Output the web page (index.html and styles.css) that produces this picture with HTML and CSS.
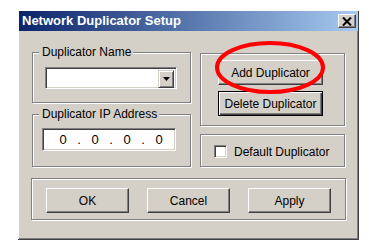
FILE: index.html
```html
<!DOCTYPE html>
<html>
<head>
<meta charset="utf-8">
<link rel="stylesheet" href="styles.css">
</head>
<body>
<div class="dialog">
  <div class="titlebar">
    <span class="title">Network Duplicator Setup</span>
    <span class="close"><svg width="10" height="9" viewBox="0 0 10 9"><path d="M1 0.5 L9 8.5 M9 0.5 L1 8.5" stroke="#000" stroke-width="2"/></svg></span>
  </div>
  <div class="content">
    <div class="main">
      <div class="col">
        <fieldset class="group name-group">
          <legend>Duplicator Name</legend>
          <div class="combo sunken">
            <div class="combo-btn"><svg width="7" height="4" viewBox="0 0 7 4"><path d="M0 0 H7 L3.5 4 Z" fill="#000"/></svg></div>
          </div>
        </fieldset>
        <fieldset class="group ip-group">
          <legend>Duplicator IP Address</legend>
          <div class="ipbox sunken">
            <span class="oct">0</span><span class="dot">.</span><span class="oct">0</span><span class="dot">.</span><span class="oct">0</span><span class="dot">.</span><span class="oct">0</span>
          </div>
        </fieldset>
      </div>
      <div class="col right">
        <fieldset class="group btn-group">
          <div class="btn add">Add Duplicator</div>
          <div class="btn del">Delete Duplicator</div>
        </fieldset>
        <fieldset class="group chk-group">
          <div class="chk-row">
            <span class="check sunken"></span>
            <span class="chk-label">Default Duplicator</span>
          </div>
        </fieldset>
      </div>
    </div>
    <fieldset class="group bottom-group">
      <div class="btn-row">
        <div class="btn ok">OK</div>
        <div class="btn cancel">Cancel</div>
        <div class="btn apply">Apply</div>
      </div>
    </fieldset>
  </div>
  <svg class="highlight" width="116" height="58" viewBox="0 0 116 58"><ellipse cx="57" cy="28.5" rx="53" ry="24.5" fill="none" stroke="#f00" stroke-width="4"/></svg>
</div>
</body>
</html>
```
FILE: styles.css
```css
html, body {
  margin: 0;
  background: #fff;
}
body {
  padding: 11px 0 0 18px;
  font-family: "Liberation Sans", Arial, sans-serif;
  font-size: 12px;
  color: #000;
}
.dialog {
  position: relative;
  width: 340px;
  height: 228px;
  background: #d4d0c8;
  border-right: 1px solid #404040;
  border-bottom: 1px solid #404040;
  box-shadow: inset 1px 0 0 #fff, inset -1px -1px 0 #808080;
}
.titlebar {
  height: 20px;
  margin-left: 1px;
  display: flex;
  align-items: center;
  justify-content: space-between;
  background: linear-gradient(to right, #0a246a, #a6caf0);
  color: #fff;
}
.title {
  font-weight: bold;
  font-size: 13px;
  padding-left: 3px;
  line-height: 20px;
}
.close {
  width: 16px;
  height: 12px;
  margin-right: 2px;
  background: #d4d0c8;
  border-top: 1px solid #fff;
  border-left: 1px solid #fff;
  border-right: 1px solid #404040;
  border-bottom: 1px solid #404040;
  box-shadow: inset -1px -1px 0 #808080;
  display: flex;
  align-items: center;
  justify-content: center;
}
.content {
  padding: 15px 0 0 14px;
}
.main {
  display: grid;
  grid-template-columns: 159px 145px;
  column-gap: 9px;
}
.col {
  display: flex;
  flex-direction: column;
}
.col.right {
  padding-top: 7px;
}
.group {
  margin: 0;
  padding: 0;
  min-width: 0;
  border: 1px solid #808080;
  box-shadow: inset 1px 1px 0 #fff, 1px 1px 0 #fff;
}
.group legend {
  padding: 0 2px 0 3px;
  margin-left: 6px;
  line-height: 12px;
  background: #d4d0c8;
}
.sunken {
  background: #fff;
  border-top: 1px solid #808080;
  border-left: 1px solid #808080;
  border-right: 1px solid #fff;
  border-bottom: 1px solid #fff;
  box-shadow: inset 1px 1px 0 #404040, inset -1px -1px 0 #d4d0c8;
  box-sizing: border-box;
}
.name-group {
  height: 57px;
  box-sizing: border-box;
}
.combo {
  margin: 9px 0 0 12px;
  width: 132px;
  height: 22px;
  display: flex;
  justify-content: flex-end;
  padding: 2px;
}
.combo-btn {
  width: 14px;
  height: 16px;
  background: #d4d0c8;
  border-top: 1px solid #d4d0c8;
  border-left: 1px solid #d4d0c8;
  border-right: 1px solid #404040;
  border-bottom: 1px solid #404040;
  box-shadow: inset 1px 1px 0 #fff, inset -1px -1px 0 #808080;
  display: flex;
  align-items: center;
  justify-content: center;
}
.ip-group {
  margin-top: 5px;
  height: 59px;
  box-sizing: border-box;
}
.ipbox {
  margin: 8px 0 0 9px;
  width: 134px;
  height: 23px;
  display: flex;
  align-items: center;
  padding-left: 9px;
  font-size: 13px;
}
.oct {
  width: 22px;
  text-align: center;
}
.dot {
  width: 10px;
  text-align: center;
}
.btn {
  box-sizing: border-box;
  height: 25px;
  display: flex;
  align-items: center;
  justify-content: center;
  background: #d4d0c8;
  border-top: 1px solid #fff;
  border-left: 1px solid #fff;
  border-right: 1px solid #404040;
  border-bottom: 1px solid #404040;
  box-shadow: inset -1px -1px 0 #808080;
}
.btn-group {
  height: 73px;
  box-sizing: border-box;
  padding: 6px 0 0 17px;
}
.btn-group .btn {
  width: 105px;
}
.btn.del {
  margin-top: 6px;
  border: 1px solid #000;
  box-shadow: inset 1px 1px 0 #fff, inset -1px -1px 0 #404040, inset -2px -2px 0 #808080;
}
.chk-group {
  margin-top: 8px;
  height: 33px;
  box-sizing: border-box;
  padding: 9px 0 0 13px;
}
.chk-row {
  display: flex;
  align-items: center;
  height: 15px;
}
.check {
  width: 13px;
  height: 13px;
  margin-right: 7px;
}
.bottom-group {
  margin: 11px 0 0 -1px;
  width: 315px;
  height: 42px;
  box-sizing: border-box;
  padding: 9px 0 0 14px;
}
.btn-row {
  display: flex;
  gap: 18px;
}
.bottom-group .btn {
  width: 83px;
}
.highlight {
  position: absolute;
  left: 195px;
  top: 28px;
}
```
